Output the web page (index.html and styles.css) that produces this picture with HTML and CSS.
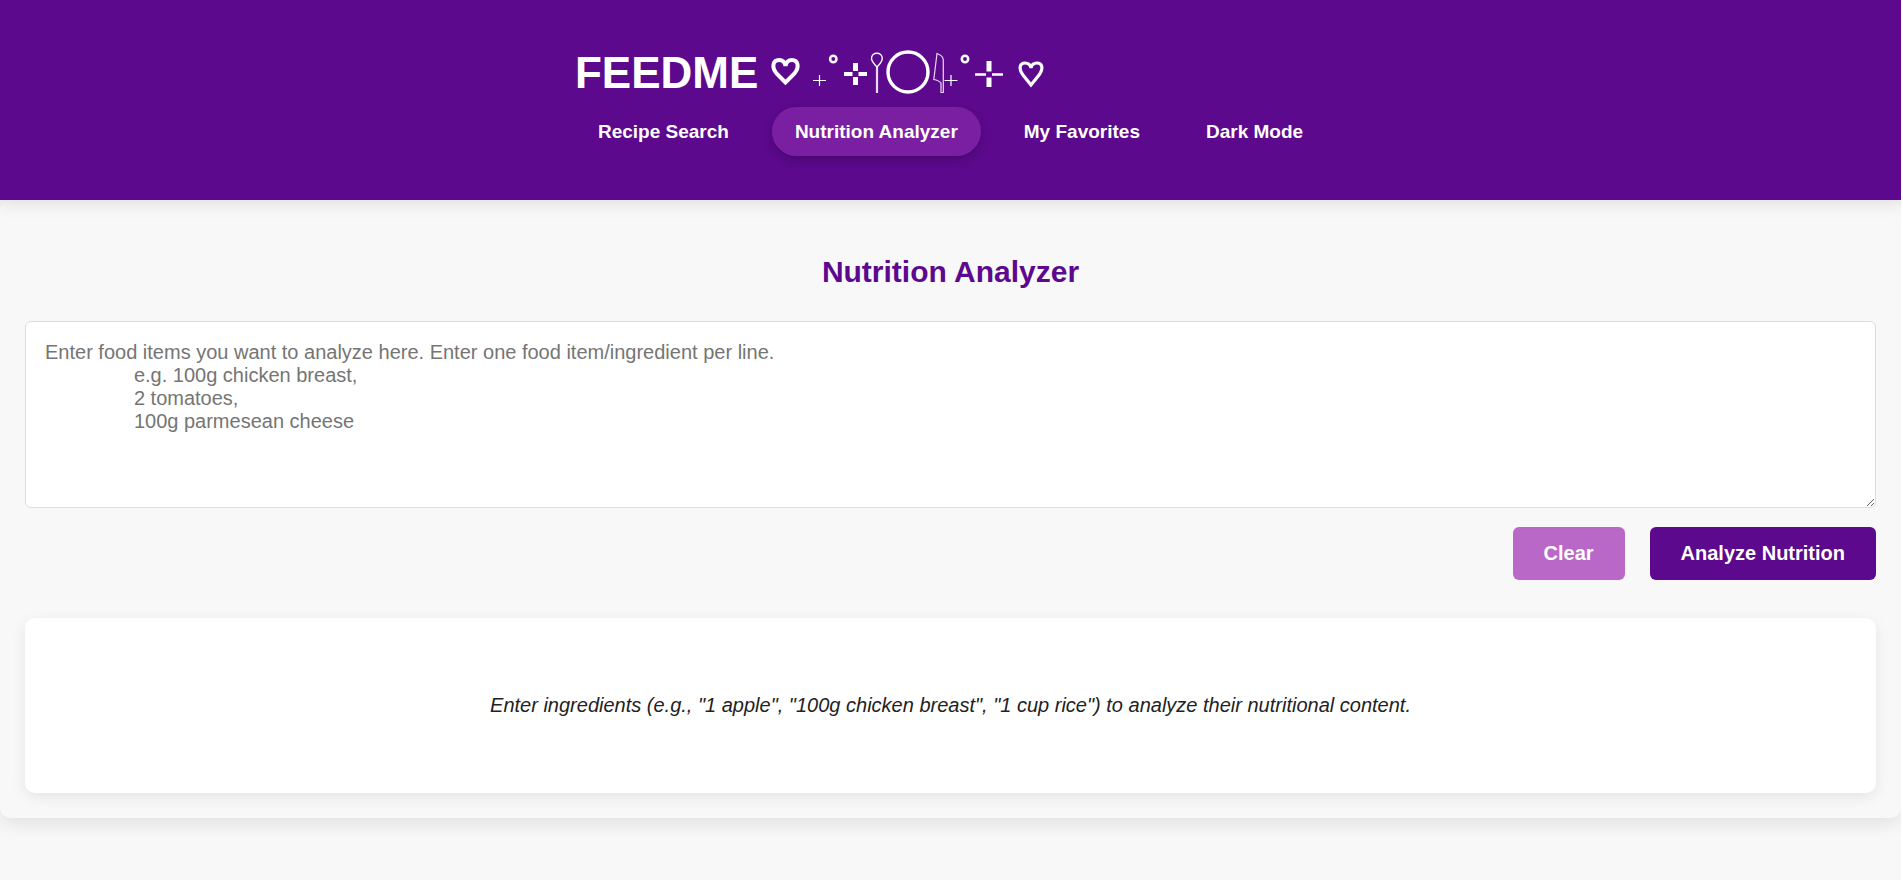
FILE: index.html
```html
<!DOCTYPE html>
<html lang="en">
<head>
<meta charset="utf-8">
<title>FeedMe - Nutrition Analyzer</title>
<link rel="stylesheet" href="styles.css">
</head>
<body>
<header class="site-header">
  <div class="header-inner">
    <h1 class="brand">
      <span>FEEDME</span>
      <svg class="brand-art" viewBox="770 45 276 55" fill="none" stroke="#fff" aria-hidden="true">
        <path stroke-width="4" stroke-linejoin="miter" d="M785.5 82.5L777 74C771 67 773 60 779 60C783 60 785 63 785.500 66C786 63 788 60 792 60C798 60 800 67 794 74Z"/>
        <path stroke-width="1.200" d="M813 80.500H826M819.500 75V86"/>
        <circle stroke-width="2.500" cx="833.300" cy="59" r="3.200"/>
        <path stroke-width="4" d="M844 74H852.500M858.500 74H867"/>
        <path stroke-width="5" d="M855.500 63V71M855.500 77V85"/>
        <path stroke-width="1.400" d="M877 67C874 64 871.500 61 871.500 58.500C871.500 51.500 882.300 51.500 882.300 58.500C882.300 61 880 64 877 67Z"/>
        <path stroke-width="2.200" stroke-opacity="0.85" d="M877 67V93"/>
        <circle stroke-width="3.400" cx="908" cy="72" r="20"/>
        <path stroke-width="1.200" stroke-opacity="0.85" d="M937 53.500C941 55 943.300 57 943.300 60V92.500H941V83C939 80.500 936.500 80 933.800 79.500Z"/>
        <path stroke-width="1.200" d="M944.500 80.500H957.500M951 75V86"/>
        <circle stroke-width="2.500" cx="965" cy="59" r="3.200"/>
        <path stroke-width="2.600" d="M975 74.500H986M992 74.500H1003"/>
        <path stroke-width="5" d="M989 61V71.500M989 77.500V87"/>
        <path stroke-width="3.200" d="M1031 85L1023 75C1018 68 1020 63 1025 63C1028.500 63 1030.500 65.500 1031 68C1031.500 65.500 1033.500 63 1037 63C1042 63 1044 68 1039 75Z"/>
      </svg>
    </h1>
    <nav class="nav">
      <a class="nav-link" href="#search">Recipe Search</a>
      <a class="nav-link active" href="#nutrition" aria-current="page">Nutrition Analyzer</a>
      <a class="nav-link" href="#favorites">My Favorites</a>
      <button class="nav-link" type="button">Dark Mode</button>
    </nav>
  </div>
</header>
<main class="panel">
  <h2 class="panel-title" id="analyzer-title">Nutrition Analyzer</h2>
  <form class="analyzer">
    <textarea class="food-input" aria-labelledby="analyzer-title" placeholder="Enter food items you want to analyze here. Enter one food item/ingredient per line.
                e.g. 100g chicken breast,
                2 tomatoes,
                100g parmesean cheese"></textarea>
    <div class="actions">
      <button class="btn btn-clear" type="reset">Clear</button>
      <button class="btn btn-primary" type="button">Analyze Nutrition</button>
    </div>
  </form>
  <section class="results">
    <p class="results-hint">Enter ingredients (e.g., "1 apple", "100g chicken breast", "1 cup rice") to analyze their nutritional content.</p>
  </section>
</main>
</body>
</html>
```
FILE: styles.css
```css
* {
  box-sizing: border-box;
}

html {
  background: #fff;
}

body {
  min-height: 100vh;
  margin: 0 2px 0 0;
  overflow: clip;
  background: #f8f8f8;
  color: #222;
  font-family: "Liberation Sans", Arial, sans-serif;
  font-size: 20px;
}

.site-header {
  position: relative;
  z-index: 1;
  display: flex;
  justify-content: center;
  padding: 38px 25px 44px;
  background: #5c098d;
  box-shadow: 0 4px 15px rgba(0, 0, 0, 0.1);
}

.brand {
  display: flex;
  align-items: center;
  gap: 12px;
  height: 69px;
  margin: 0;
  color: #fff;
  font-size: 44px;
  line-height: 67px;
}

.brand-art {
  width: 276px;
  height: 55px;
}

.nav {
  display: flex;
  gap: 20px;
}

.nav-link {
  padding: 12px 23px;
  border: 0;
  border-radius: 25px;
  background: transparent;
  color: #fff;
  font-family: inherit;
  font-size: 19px;
  font-weight: bold;
  line-height: 25px;
  text-decoration: none;
}

.nav-link.active {
  background: #7b1fa2;
  box-shadow: 0 4px 10px rgba(0, 0, 0, 0.2);
}

.panel {
  padding: 49px 25px 25px;
  border-radius: 10px;
  background: #f8f8f8;
  box-shadow: 0 5px 20px rgba(0, 0, 0, 0.1);
}

.panel-title {
  margin: 0 0 26px;
  color: #5c098d;
  font-size: 30px;
  line-height: 46px;
  text-align: center;
}

.food-input {
  display: block;
  width: 100%;
  height: 187px;
  padding: 19px;
  border: 1px solid #ddd;
  border-radius: 6px;
  background: #fff;
  color: #222;
  font-family: inherit;
  font-size: 20px;
  line-height: 23px;
  resize: vertical;
}

.food-input::placeholder {
  color: #757575;
}

.actions {
  display: flex;
  justify-content: flex-end;
  gap: 25px;
  margin-top: 19px;
}

.btn {
  padding: 15px 31px;
  border: 0;
  border-radius: 6px;
  color: #fff;
  font-family: inherit;
  font-size: 20px;
  font-weight: bold;
  line-height: 23px;
}

.btn-clear {
  background: #ba68c8;
}

.btn-primary {
  background: #5c098d;
}

.results {
  margin-top: 38px;
  padding: 72px 25px;
  border-radius: 10px;
  background: #fff;
  box-shadow: 0 4px 15px rgba(0, 0, 0, 0.08);
}

.results-hint {
  margin: 0;
  font-style: italic;
  line-height: 31px;
  text-align: center;
}
```
